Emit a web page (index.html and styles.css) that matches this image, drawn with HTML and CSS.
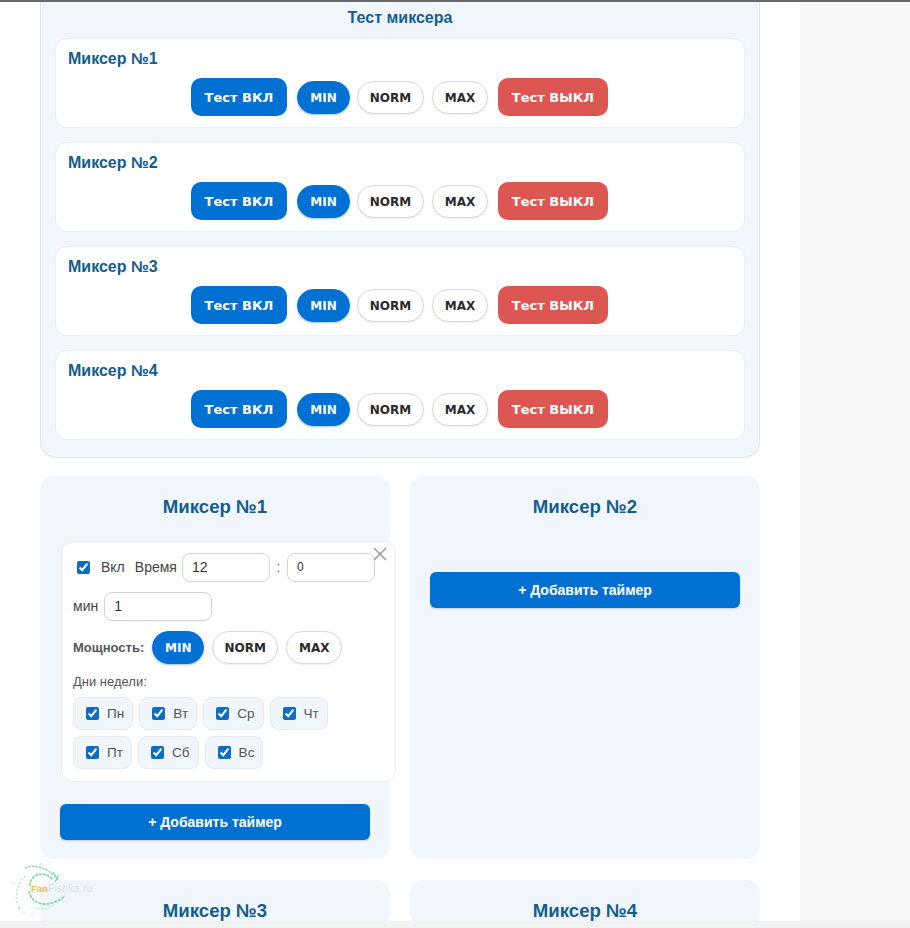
FILE: index.html
```html
<!DOCTYPE html>
<html lang="ru">
<head>
<meta charset="UTF-8">
<meta name="viewport" content="width=device-width, initial-scale=1.0">
<link rel="stylesheet" href="styles.css">
<title>Миксеры</title>
</head>
<body>
  <div class="top-line"></div>
  <div class="page">
    <section class="test-panel">
      <h3 class="test-title">Тест миксера</h3>

      <div class="test-card">
        <h4>Миксер №1</h4>
        <div class="test-row">
          <button class="btn btn-on">Тест ВКЛ</button>
          <button class="pill p-min active">MIN</button>
          <button class="pill p-norm">NORM</button>
          <button class="pill p-max">MAX</button>
          <button class="btn btn-off">Тест ВЫКЛ</button>
        </div>
      </div>

      <div class="test-card">
        <h4>Миксер №2</h4>
        <div class="test-row">
          <button class="btn btn-on">Тест ВКЛ</button>
          <button class="pill p-min active">MIN</button>
          <button class="pill p-norm">NORM</button>
          <button class="pill p-max">MAX</button>
          <button class="btn btn-off">Тест ВЫКЛ</button>
        </div>
      </div>

      <div class="test-card">
        <h4>Миксер №3</h4>
        <div class="test-row">
          <button class="btn btn-on">Тест ВКЛ</button>
          <button class="pill p-min active">MIN</button>
          <button class="pill p-norm">NORM</button>
          <button class="pill p-max">MAX</button>
          <button class="btn btn-off">Тест ВЫКЛ</button>
        </div>
      </div>

      <div class="test-card">
        <h4>Миксер №4</h4>
        <div class="test-row">
          <button class="btn btn-on">Тест ВКЛ</button>
          <button class="pill p-min active">MIN</button>
          <button class="pill p-norm">NORM</button>
          <button class="pill p-max">MAX</button>
          <button class="btn btn-off">Тест ВЫКЛ</button>
        </div>
      </div>
    </section>

    <div class="mixers">
      <section class="mixer">
        <h2>Миксер №1</h2>
        <div class="timer">
          <button class="timer-close" aria-label="Удалить">
            <svg width="14" height="14" viewBox="0 0 14 14"><path d="M1 1L13 13M13 1L1 13" stroke="#9aa0a6" stroke-width="1.6" fill="none"/></svg>
          </button>
          <div class="timer-line">
            <label class="enable"><input type="checkbox" checked> Вкл</label>
            <span class="time-label">Время</span>
            <input class="num num-time" type="text" value="12">
            <span class="colon">:</span>
            <input class="num num-time num-last" type="text" value="0">
          </div>
          <div class="timer-line line-min">
            <span class="min-label">мин</span>
            <input class="num num-min" type="text" value="1">
          </div>
          <div class="power">
            <span class="power-label">Мощность:</span>
            <button class="pill t-min active">MIN</button>
            <button class="pill t-norm">NORM</button>
            <button class="pill p-max">MAX</button>
          </div>
          <div class="days-label">Дни недели:</div>
          <div class="days">
            <label class="day"><input type="checkbox" checked> Пн</label>
            <label class="day"><input type="checkbox" checked> Вт</label>
            <label class="day"><input type="checkbox" checked> Ср</label>
            <label class="day"><input type="checkbox" checked> Чт</label>
            <label class="day"><input type="checkbox" checked> Пт</label>
            <label class="day"><input type="checkbox" checked> Сб</label>
            <label class="day"><input type="checkbox" checked> Вс</label>
          </div>
        </div>
        <button class="add-btn">+ Добавить таймер</button>
      </section>

      <section class="mixer">
        <h2>Миксер №2</h2>
        <button class="add-btn add-empty">+ Добавить таймер</button>
      </section>

      <section class="mixer">
        <h2>Миксер №3</h2>
      </section>

      <section class="mixer">
        <h2>Миксер №4</h2>
      </section>
    </div>
  </div>

  <!-- watermark -->
  <div class="logo">
    <svg width="100" height="64" viewBox="0 0 100 64" fill="none">
      <path d="M20 10C30 6 44 10 53 22" stroke="#86dba6" stroke-width="1.5" stroke-dasharray="2.5 1"/>
      <path d="M25 28C24 18 38 10 48 22" stroke="#79d69b" stroke-width="1.5" stroke-dasharray="3 1"/>
      <path d="M24 33C26 46 42 52 60 38" stroke="#79d69b" stroke-width="1.7" stroke-dasharray="3 1"/>
      <path d="M12 45C10 34 13 26 20 18" stroke="#93dfaf" stroke-width="1.3" stroke-dasharray="1.5 2.5"/>
      <path d="M30 50C38 52 44 50 50 46" stroke="#a3e5bc" stroke-width="1.1" stroke-dasharray="1.5 2"/>
      <path d="M48 14L52 20M50 24L54 17" stroke="#86dba6" stroke-width="1.2"/>
      <circle cx="8" cy="25" r="0.8" fill="#a3e5bc"/>
      <circle cx="14" cy="50" r="0.9" fill="#93dfaf"/>
      <circle cx="19" cy="54" r="0.8" fill="#a3e5bc"/>
      <circle cx="36" cy="6" r="0.8" fill="#93dfaf"/>
      <circle cx="27" cy="57" r="0.8" fill="#a3e5bc"/>
    </svg>
    <span class="logo-text"><b>Fan</b>Fishka.ru</span>
  </div>

  <div class="bottom-strip"></div>
</body>
</html>
```

FILE: styles.css
```css
* {
  box-sizing: border-box;
  margin: 0;
  padding: 0;
}

html,
body {
  height: 928px;
  overflow: hidden;
}

body {
  background-color: #f6f7f8;
  font-family: "Liberation Sans", Arial, sans-serif;
  color: #333;
}

.top-line {
  height: 2px;
  background-color: #66686b;
}

.page {
  width: 800px;
  height: 926px;
  overflow: hidden;
  background-color: #fff;
  padding: 0 40px;
}

button {
  border: none;
  cursor: pointer;
}

/* test panel */
.test-panel {
  height: 456px;
  background-color: #f1f6fc;
  border: 1px solid #dfe7ee;
  border-top: none;
  border-radius: 0 0 16px 16px;
  padding: 0 14px;
}

.test-title {
  height: 36px;
  padding-top: 6px;
  text-align: center;
  font-size: 16px;
  line-height: 19px;
  font-weight: bold;
  color: #135d8e;
}

.test-card {
  height: 90px;
  margin-bottom: 14px;
  padding: 11px 12px 0;
  background-color: #fff;
  border: 1px solid #e8eef4;
  border-radius: 12px;
}

.test-card h4 {
  font-size: 16px;
  line-height: 19px;
  margin-top: -1px;
  color: #135d8e;
}

.test-row {
  display: flex;
  justify-content: center;
  align-items: center;
  gap: 7px;
  margin-top: 10px;
  padding-right: 1px;
}

.btn {
  height: 38px;
  border-radius: 10px;
  color: #fff;
  font-family: "DejaVu Sans", sans-serif;
  font-size: 13px;
  font-weight: bold;
}

.btn-on {
  width: 96px;
  margin-right: 3px;
  background-color: #0070d2;
}

.btn-off {
  width: 110px;
  margin-left: 3px;
  background-color: #dc5652;
}

.pill {
  height: 33px;
  padding: 1px 0 0;
  border: 1px solid #d9d9d9;
  border-radius: 17px;
  background-color: #fff;
  color: #2a2a2a;
  font-family: "DejaVu Sans", sans-serif;
  font-size: 12px;
  font-weight: bold;
  box-shadow: 0 1px 2px rgba(0, 0, 0, 0.08);
}

.p-min {
  width: 53px;
}

.p-norm {
  width: 67px;
  margin-right: 1px;
}

.p-max {
  width: 56px;
}

.t-min {
  width: 52px;
}

.t-norm {
  width: 66px;
}

.pill.active {
  background-color: #0070d2;
  border-color: #0070d2;
  color: #fff;
  box-shadow: 0 1px 2px rgba(0, 112, 210, 0.4);
}

/* mixer grid */
.mixers {
  display: grid;
  grid-template-columns: 350px 350px;
  grid-template-rows: 383px 46px;
  column-gap: 20px;
  row-gap: 21px;
  margin-top: 18px;
}

.mixer {
  background-color: #f1f6fc;
  border-radius: 14px;
  padding: 21px 20px 0;
}

.mixer h2 {
  text-align: center;
  font-size: 18.6px;
  line-height: 20px;
  color: #135d8e;
}

.timer {
  position: relative;
  width: 335px;
  height: 241px;
  margin: 24px 0 0 1px;
  padding: 10px 11px 0;
  background-color: #fff;
  border: 1px solid #e9eef3;
  border-radius: 12px;
}

.timer-close {
  position: absolute;
  top: 5px;
  right: 7px;
  width: 16px;
  height: 16px;
  background: none;
}

.timer-line {
  display: flex;
  align-items: center;
  height: 30px;
  font-size: 14px;
  color: #444;
}

.enable {
  display: flex;
  align-items: center;
  gap: 11px;
  margin-left: 4px;
}

.enable input,
.day input {
  width: 13px;
  height: 13px;
  accent-color: #0c6dc4;
}

.time-label {
  margin-left: 10px;
  margin-right: 5px;
}

.num {
  height: 29px;
  padding: 0 9px;
  border: 1px solid #cfd4d8;
  border-radius: 8px;
  font-family: "Liberation Sans", Arial, sans-serif;
  font-size: 14px;
  color: #333;
}

.num-time {
  width: 88px;
}

.num-last {
  font-size: 12px;
}

.colon {
  width: 17px;
  text-align: center;
  color: #777;
}

.line-min {
  margin-top: 9px;
}

.min-label {
  margin-right: 6px;
}

.num-min {
  width: 108px;
}

.power {
  display: flex;
  align-items: center;
  gap: 8px;
  margin-top: 10px;
}

.power-label {
  font-size: 13px;
  font-weight: bold;
  color: #555;
}

.days-label {
  margin-top: 10px;
  font-size: 13px;
  line-height: 15px;
  color: #555;
}

.days {
  display: flex;
  flex-wrap: wrap;
  gap: 6px;
  margin-top: 8px;
}

.day {
  display: flex;
  align-items: center;
  gap: 8px;
  height: 33px;
  padding: 0 8px 0 12px;
  background-color: #f1f6fc;
  border: 1px solid #e3e9f0;
  border-radius: 9px;
  font-size: 13.6px;
  color: #555;
}

.add-btn {
  display: block;
  width: 310px;
  height: 36px;
  margin-top: 22px;
  border-radius: 6px;
  background-color: #0070d2;
  color: #fff;
  font-family: "Liberation Sans", Arial, sans-serif;
  font-size: 14px;
  font-weight: bold;
  box-shadow: 0 1px 2px rgba(0, 60, 120, 0.2);
}

.add-empty {
  margin-top: 55px;
}

/* overlays */
.logo {
  position: absolute;
  left: 5px;
  top: 858px;
  width: 100px;
  height: 64px;
}

.logo svg {
  position: absolute;
  left: 0;
  top: 0;
}

.logo-text {
  position: absolute;
  left: 26px;
  top: 25px;
  font-size: 10px;
  line-height: 12px;
  letter-spacing: 0.4px;
  color: #cfe3e6;
}

.logo-text b {
  font-size: 9.5px;
  letter-spacing: 0;
  color: #f2bd2c;
}

.bottom-strip {
  position: fixed;
  left: 0;
  bottom: 0;
  width: 100%;
  height: 7px;
  background-color: #f1f2f2;
}
```
